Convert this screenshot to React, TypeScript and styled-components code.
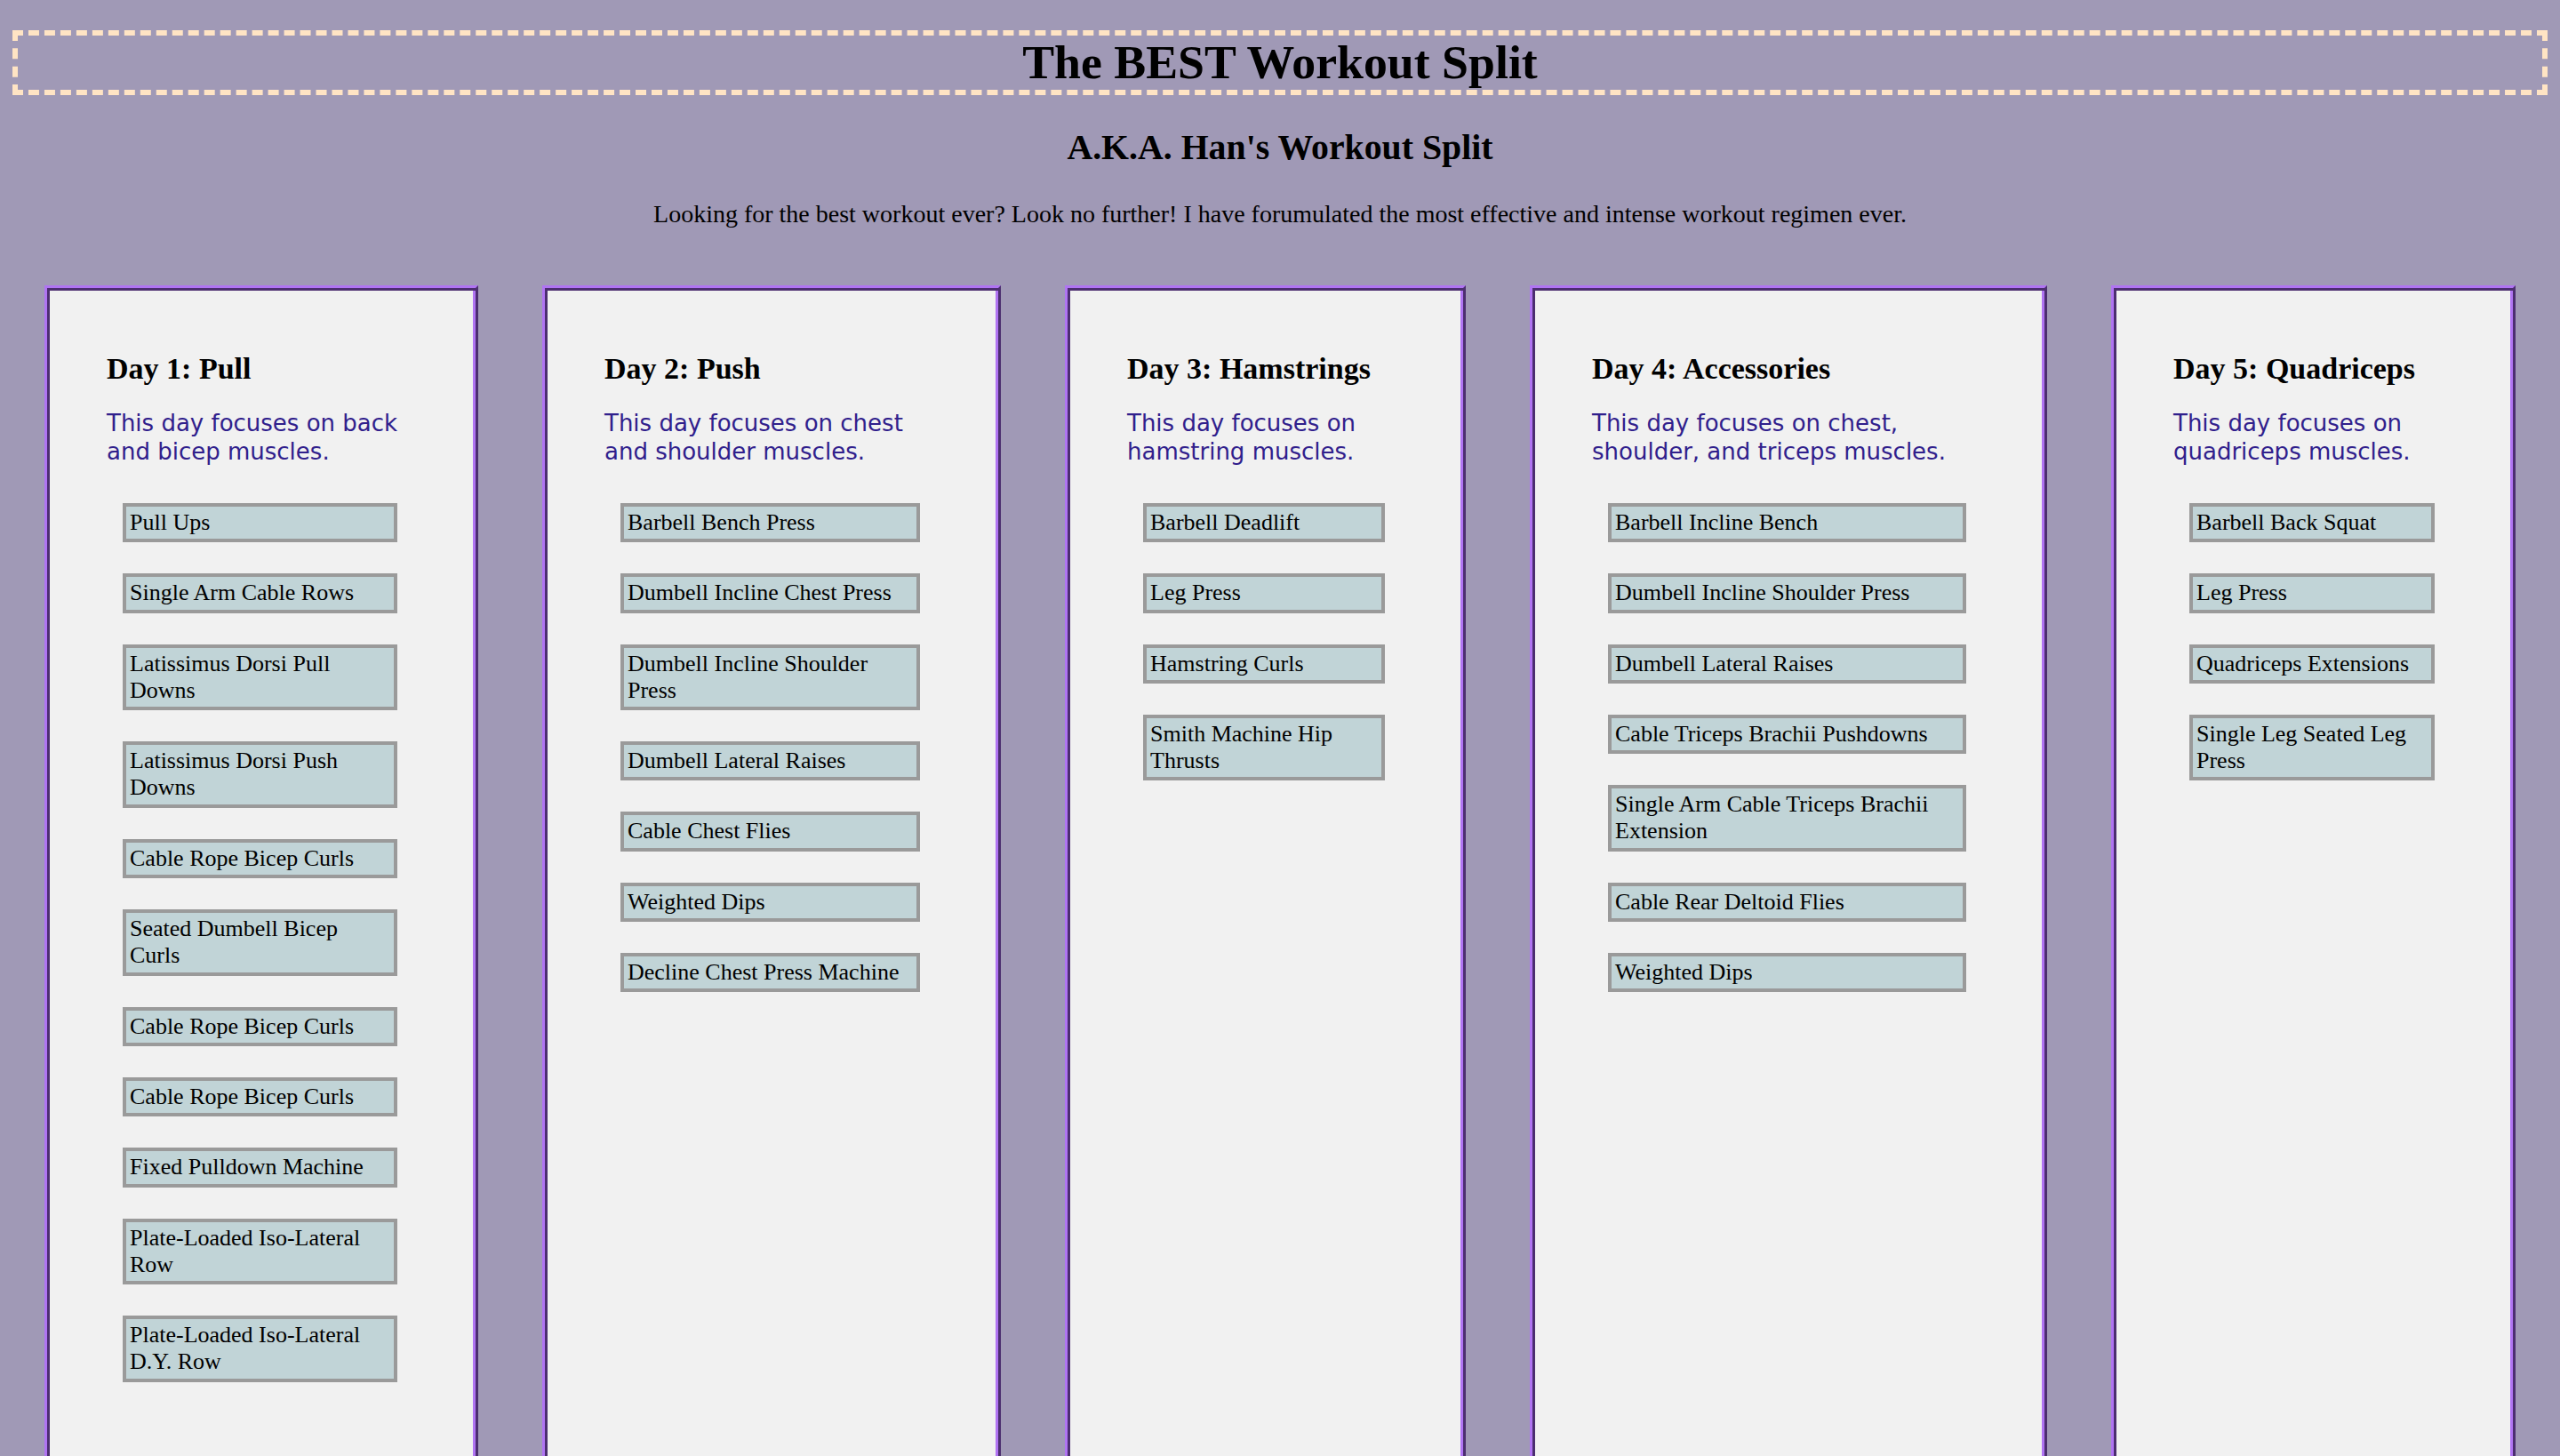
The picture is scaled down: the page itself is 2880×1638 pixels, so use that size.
import React from "react";
import styled, { createGlobalStyle } from "styled-components";

const GlobalStyle = createGlobalStyle`
  html, body {
    margin: 0;
    background: #a099b6;
  }
  body {
    padding: 14px;
    font-family: "Liberation Serif", "Times New Roman", serif;
    color: #000;
  }
`;

const Page = styled.main`
  display: flex;
  flex-direction: column;
`;

const Title = styled.h1`
  margin: 20px 0 0;
  border: 6px dashed #ffe4c4;
  font: bold 53.8px/61px "Liberation Serif", "Times New Roman", serif;
  text-align: center;
`;

const Subtitle = styled.h2`
  margin: 37px 0 0;
  font: bold 39.8px/45px "Liberation Serif", "Times New Roman", serif;
  text-align: center;
`;

const Intro = styled.p`
  margin: 36px 0 0;
  font: 28px/32px "Liberation Serif", "Times New Roman", serif;
  text-align: center;
`;

const DayRow = styled.section`
  margin-top: 64px;
  display: flex;
  justify-content: space-around;
  align-items: stretch;
`;

const DayCard = styled.article<{ $width: number }>`
  box-sizing: border-box;
  width: ${(p) => p.$width}px;
  flex: none;
  background: #f1f1f1;
  border-style: solid;
  border-width: 3px;
  border-color: #b074f2 #4c2e70 #4c2e70 #b074f2;
  box-shadow: inset 3px 3px 0 #4c2e70, inset -3px -3px 0 #b074f2;
  padding: 71px 67px 160px;
`;

const DayTitle = styled.h3`
  margin: 0;
  font: bold 34px/39px "Liberation Serif", "Times New Roman", serif;
`;

const DayDesc = styled.p`
  margin: 27px 0 0;
  font: 26px/31.5px "DejaVu Sans", Verdana, sans-serif;
  color: #30208c;
`;

const ExerciseList = styled.ul`
  margin: 42px 0 0;
  padding: 0;
  list-style: none;
  display: flex;
  flex-direction: column;
  gap: 35px;
`;

const Exercise = styled.li`
  margin: 0 21px 0 18px;
  border: 4px solid #9a9a9a;
  background: #c1d4d7;
  padding: 3px 4px;
  font: 26px/30.3px "Liberation Serif", "Times New Roman", serif;
`;

type Day = { title: string; desc: string; width: number; items: string[] };

const days: Day[] = [
  {
    title: "Day 1: Pull",
    desc: "This day focuses on back and bicep muscles.",
    width: 488,
    items: [
      "Pull Ups",
      "Single Arm Cable Rows",
      "Latissimus Dorsi Pull Downs",
      "Latissimus Dorsi Push Downs",
      "Cable Rope Bicep Curls",
      "Seated Dumbell Bicep Curls",
      "Cable Rope Bicep Curls",
      "Cable Rope Bicep Curls",
      "Fixed Pulldown Machine",
      "Plate-Loaded Iso-Lateral Row",
      "Plate-Loaded Iso-Lateral D.Y. Row",
    ],
  },
  {
    title: "Day 2: Push",
    desc: "This day focuses on chest and shoulder muscles.",
    width: 516,
    items: [
      "Barbell Bench Press",
      "Dumbell Incline Chest Press",
      "Dumbell Incline Shoulder Press",
      "Dumbell Lateral Raises",
      "Cable Chest Flies",
      "Weighted Dips",
      "Decline Chest Press Machine",
    ],
  },
  {
    title: "Day 3: Hamstrings",
    desc: "This day focuses on hamstring muscles.",
    width: 451,
    items: ["Barbell Deadlift", "Leg Press", "Hamstring Curls", "Smith Machine Hip Thrusts"],
  },
  {
    title: "Day 4: Accessories",
    desc: "This day focuses on chest, shoulder, and triceps muscles.",
    width: 582,
    items: [
      "Barbell Incline Bench",
      "Dumbell Incline Shoulder Press",
      "Dumbell Lateral Raises",
      "Cable Triceps Brachii Pushdowns",
      "Single Arm Cable Triceps Brachii Extension",
      "Cable Rear Deltoid Flies",
      "Weighted Dips",
    ],
  },
  {
    title: "Day 5: Quadriceps",
    desc: "This day focuses on quadriceps muscles.",
    width: 455,
    items: ["Barbell Back Squat", "Leg Press", "Quadriceps Extensions", "Single Leg Seated Leg Press"],
  },
];

export default function App() {
  return (
    <>
      <GlobalStyle />
      <Page>
        <Title>The BEST Workout Split</Title>
        <Subtitle>A.K.A. Han's Workout Split</Subtitle>
        <Intro>
          Looking for the best workout ever? Look no further! I have forumulated the most effective and intense
          workout regimen ever.
        </Intro>
        <DayRow>
          {days.map((d) => (
            <DayCard key={d.title} $width={d.width}>
              <DayTitle>{d.title}</DayTitle>
              <DayDesc>{d.desc}</DayDesc>
              <ExerciseList>
                {d.items.map((it, i) => (
                  <Exercise key={i}>{it}</Exercise>
                ))}
              </ExerciseList>
            </DayCard>
          ))}
        </DayRow>
      </Page>
    </>
  );
}
